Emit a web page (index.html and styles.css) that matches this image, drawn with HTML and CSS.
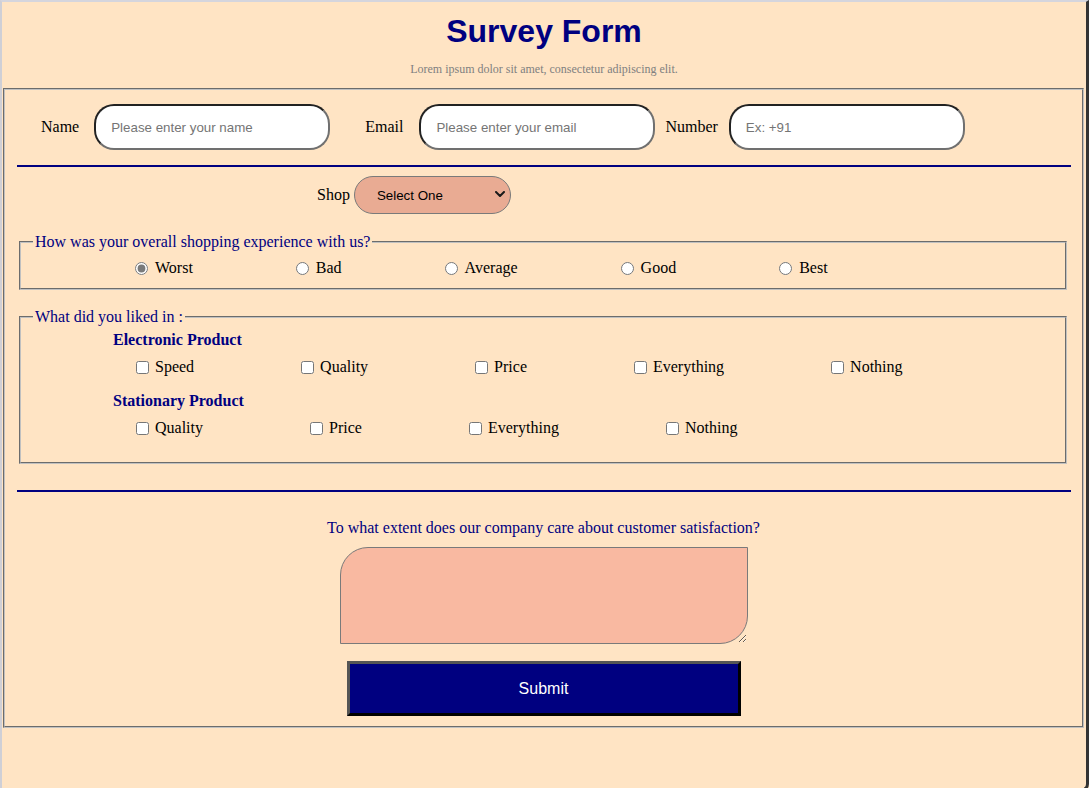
FILE: index.html
```html
<!DOCTYPE html>
<html lang="en">
<head>
<meta charset="utf-8">
<title>Survey Form</title>
<link rel="stylesheet" href="styles.css">
</head>
<body>
<div class="page">
  <header class="head">
    <h1 class="title">Survey Form</h1>
    <p class="subtitle">Lorem ipsum dolor sit amet, consectetur adipiscing elit.</p>
  </header>
  <form class="survey">
    <div class="contact">
      <label class="lbl lbl-name">Name</label><input class="field field-name" type="text" placeholder="Please enter your name">
      <label class="lbl lbl-email">Email</label><input class="field field-email" type="email" placeholder="Please enter your email">
      <label class="lbl lbl-number">Number</label><input class="field field-number" type="text" placeholder="Ex: +91">
    </div>
    <div class="rule"></div>
    <div class="shop-row">
      <label class="shop-label">Shop</label>
      <span class="select-wrap">
        <select class="shop"><option>Select One</option></select>
        <svg class="chev" width="10" height="6" viewBox="0 0 10 6"><path d="M1 1 L5 5 L9 1" fill="none" stroke="#1a1a1a" stroke-width="2" stroke-linecap="round" stroke-linejoin="round"/></svg>
      </span>
    </div>
    <fieldset class="group group-rate">
      <legend class="legend">How was your overall shopping experience with us?</legend>
      <div class="options radios">
        <label class="opt"><input type="radio" name="rate" checked><span>Worst</span></label>
        <label class="opt"><input type="radio" name="rate"><span>Bad</span></label>
        <label class="opt"><input type="radio" name="rate"><span>Average</span></label>
        <label class="opt"><input type="radio" name="rate"><span>Good</span></label>
        <label class="opt"><input type="radio" name="rate"><span>Best</span></label>
      </div>
    </fieldset>
    <fieldset class="group group-like">
      <legend class="legend">What did you liked in :</legend>
      <div class="cat">Electronic Product</div>
      <div class="options checks">
        <label class="opt"><input type="checkbox"><span>Speed</span></label>
        <label class="opt"><input type="checkbox"><span>Quality</span></label>
        <label class="opt"><input type="checkbox"><span>Price</span></label>
        <label class="opt"><input type="checkbox"><span>Everything</span></label>
        <label class="opt"><input type="checkbox"><span>Nothing</span></label>
      </div>
      <div class="cat">Stationary Product</div>
      <div class="options checks">
        <label class="opt"><input type="checkbox"><span>Quality</span></label>
        <label class="opt"><input type="checkbox"><span>Price</span></label>
        <label class="opt"><input type="checkbox"><span>Everything</span></label>
        <label class="opt"><input type="checkbox"><span>Nothing</span></label>
      </div>
    </fieldset>
    <div class="rule rule-2"></div>
    <p class="question">To what extent does our company care about customer satisfaction?</p>
    <textarea class="answer"></textarea>
    <button class="submit" type="button">Submit</button>
  </form>
</div>
</body>
</html>
```

FILE: styles.css
```css
html, body {
  margin: 0;
  padding: 0;
  background: #ffe4c4;
}

body {
  font-family: "Liberation Serif", "Times New Roman", serif;
  font-size: 16px;
  color: #000;
}

.page {
  box-sizing: border-box;
  min-height: 792px;
  background: #ffe4c4;
  border-top: 2px solid #d5d5dd;
  border-left: 2px solid #cfcfd6;
  border-right: 3px solid #333;
  border-bottom: 3px solid #333;
  border-bottom-right-radius: 8px;
}

.head {
  text-align: center;
}

.title {
  margin: 11px 0 0;
  font-family: "Liberation Sans", Arial, sans-serif;
  font-weight: 700;
  font-size: 32px;
  line-height: normal;
  color: #000080;
}

.subtitle {
  margin: 12px 0 0;
  font-size: 12px;
  line-height: normal;
  color: #808080;
}

.survey {
  margin: 11px 2px 0 1px;
  border: 2px groove #c0c0c0;
}

/* contact row */
.contact {
  display: flex;
  align-items: center;
  padding: 14px 0 0 36px;
}

.lbl {
  font-size: 16px;
  margin-top: -1px;
}

.lbl-name { margin-right: 15px; }
.lbl-email { margin-right: 16px; }
.lbl-number { margin-right: 11px; }

.field {
  box-sizing: border-box;
  width: 236px;
  height: 46px;
  padding: 0 15px;
  border-style: solid;
  border-width: 2px;
  border-color: #222 #707070 #707070 #222;
  border-radius: 20px;
  background: #fff;
  font-family: "Liberation Sans", Arial, sans-serif;
  font-size: 13.333px;
  color: #000;
  outline: none;
}

.field::placeholder {
  color: #757575;
}

.field-name { margin-right: 35px; }
.field-email { margin-right: 10px; }

.rule {
  height: 2px;
  background: #000080;
  margin: 15px 11px 0 12px;
}

/* shop */
.shop-row {
  display: flex;
  align-items: center;
  margin-top: 9px;
  padding-left: 312px;
}

.shop-label {
  margin-right: 4px;
}

.select-wrap {
  position: relative;
  display: inline-block;
}

.shop {
  appearance: none;
  -webkit-appearance: none;
  box-sizing: border-box;
  width: 157px;
  height: 38px;
  padding: 0 0 0 22px;
  border: 1px solid #7a7a7a;
  border-radius: 19px;
  background: #e9ab93;
  font-family: "Liberation Sans", Arial, sans-serif;
  font-size: 13.333px;
  color: #000;
  display: block;
}

.chev {
  position: absolute;
  right: 6px;
  top: 15px;
  pointer-events: none;
}

/* fieldsets */
.group {
  margin: 19px 15px 0 14px;
  padding: 7px 12px 10px;
  border: 2px groove #c0c0c0;
  min-width: 0;
}

.group-like {
  margin-top: 18px;
  padding-top: 5px;
  padding-bottom: 9px;
}

.legend {
  padding: 0 2px;
  color: #000080;
  font-size: 16px;
}

.options {
  display: flex;
  align-items: center;
  height: 20px;
}

.radios {
  gap: 103px;
  padding-left: 102px;
}

.checks {
  gap: 107px;
  padding-left: 103px;
  margin: 8px 0 15px;
}

.opt {
  display: flex;
  align-items: center;
  gap: 7px;
  white-space: nowrap;
}

.checks .opt {
  gap: 6px;
}

.opt input {
  margin: 0;
  width: 13px;
  height: 13px;
}

.radios input {
  accent-color: #7a7a7a;
}

.cat {
  padding-left: 80px;
  font-weight: 700;
  color: #000080;
}

.rule-2 {
  margin-top: 26px;
}

.question {
  margin: 27px 0 10px;
  text-align: center;
  color: #000080;
  line-height: normal;
}

.answer {
  display: block;
  box-sizing: border-box;
  width: 408px;
  height: 97px;
  margin: 0 auto;
  padding: 2px;
  border: 1px solid #7a7a7a;
  border-radius: 28px 0 28px 0;
  background: #f9b9a1;
  outline: none;
}

.submit {
  display: block;
  box-sizing: border-box;
  width: 394px;
  height: 55px;
  margin: 17px auto 10px;
  border-style: solid;
  border-width: 3px;
  border-color: #555 #000 #000 #555;
  background: #000080;
  color: #fff;
  font-family: "Liberation Sans", Arial, sans-serif;
  font-size: 16px;
}
```
